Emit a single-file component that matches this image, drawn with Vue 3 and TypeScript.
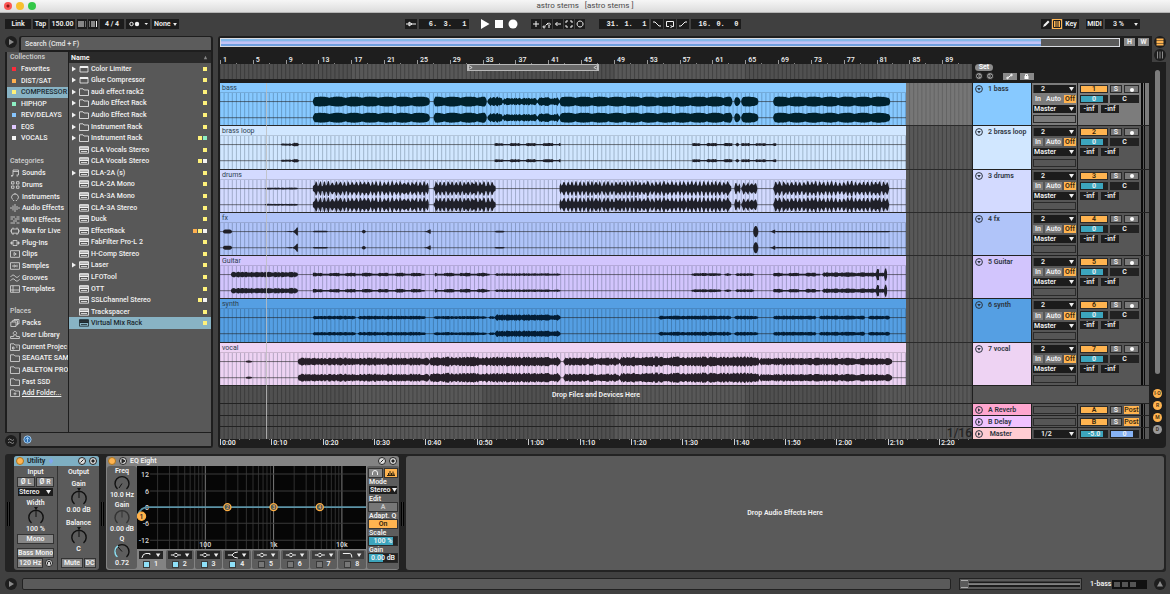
<script setup lang="ts">
interface Segment { from: number; to: number; amp: number; kind: 'swell' | 'noise' | 'spike' | 'burst' | 'solid' | 'rise' }
interface Track { name: string; tone: string; segments: Segment[] }

const seg = (from: number, to: number, amp: number, kind: Segment['kind']): Segment => ({ from, to, amp, kind })

const LANE = 753
const CLIP = 687
const BAR = 8.22

const tracks: Track[] = [
  { name: 'bass', tone: 'bass', segments: [
    seg(93, 210, 5, 'swell'), seg(214, 267, 5, 'swell'), seg(268, 283, 5, 'noise'), seg(283, 318, 3.8, 'noise'), seg(318, 340, 4.6, 'noise'),
    seg(340, 513, 5, 'swell'), seg(515, 521, 5, 'swell'), seg(522, 539, 5, 'swell'), seg(554, 671, 5, 'swell')] },
  { name: 'brass loop', tone: 'brass', segments: [
    seg(61, 72, 1.3, 'noise'), seg(72, 79, 2, 'noise'), seg(275, 341, 1.6, 'burst'), seg(473, 513, 1.6, 'burst'),
    seg(516, 520, 1.8, 'noise'), seg(522, 557, 1.6, 'burst')] },
  { name: 'drums', tone: 'drums', segments: [
    seg(45, 78, 1, 'noise'), seg(93, 209, 7.5, 'spike'), seg(214, 276, 7.5, 'spike'), seg(340, 512, 7.5, 'spike'),
    seg(515, 521, 7.5, 'spike'), seg(522, 538, 6.5, 'spike'), seg(554, 670, 7.5, 'spike')] },
  { name: 'fx', tone: 'fx', segments: [
    seg(3, 12, 2, 'solid'), seg(62, 72, 0.8, 'rise'), seg(71, 78, 5, 'rise'), seg(93, 108, 0.7, 'solid'), seg(142, 146, 1.8, 'solid'),
    seg(203, 211, 2.6, 'rise'), seg(275, 285, 0.8, 'solid'), seg(534, 539, 5.5, 'solid'), seg(549, 556, 2.4, 'rise'), seg(556, 671, 0.6, 'solid')] },
  { name: 'Guitar', tone: 'guitar', segments: [
    seg(11, 78, 2.9, 'noise'), seg(93, 205, 1.9, 'burst'), seg(215, 270, 1.9, 'burst'), seg(275, 341, 1.3, 'noise'),
    seg(472, 502, 1.5, 'noise'), seg(505, 512, 1.4, 'noise'), seg(516, 535, 1.4, 'noise'), seg(554, 601, 1.9, 'burst'),
    seg(603, 668, 2.3, 'noise'), seg(656, 660, 7.5, 'rise'), seg(657, 660, 7, 'solid'), seg(665, 668, 7.5, 'solid')] },
  { name: 'synth', tone: 'synth', segments: [
    seg(93, 136, 1.9, 'noise'), seg(138, 206, 1.9, 'noise'), seg(214, 267, 1.6, 'noise'), seg(269, 275, 1.6, 'noise'), seg(275, 341, 3.2, 'noise'),
    seg(439, 512, 2, 'noise'), seg(515, 539, 1.9, 'noise'), seg(554, 597, 2, 'noise'), seg(600, 646, 2, 'noise'), seg(649, 671, 2, 'noise')] },
  { name: 'vocal', tone: 'vocal', segments: [
    seg(26, 32, 1.4, 'noise'), seg(78, 210, 4.2, 'noise'), seg(210, 341, 5, 'noise'), seg(344, 400, 4.2, 'noise'),
    seg(400, 540, 5.2, 'noise'), seg(540, 673, 3.9, 'noise')] },
]

const random = (n: number): number => {
  const v = Math.sin(n * 12.9898) * 43758.5453
  return v - Math.floor(v)
}

function level(s: Segment, x: number): number {
  const t = (x - s.from) / (s.to - s.from)
  const edge = Math.min(1, (x - s.from + 0.6) / 2, (s.to - x + 0.6) / 2)
  const phase = ((x - 93) / (BAR * 2)) % 1
  if (s.kind === 'solid') return s.amp * edge
  if (s.kind === 'rise') return s.amp * (t > 0.8 ? 0.8 : t * t)
  if (s.kind === 'swell') return s.amp * edge * (0.7 + 0.3 * Math.sqrt(Math.abs(Math.sin(Math.PI * phase)))) * (0.94 + 0.06 * random(x))
  if (s.kind === 'spike') return s.amp * edge * (Math.round(x) % 4 < 2 ? 0.75 + 0.25 * random(x) : 0.3 + 0.3 * random(x))
  if (s.kind === 'burst') return s.amp * (Math.abs(phase) < 0.6 ? 0.6 + 0.4 * random(x) : 0.4)
  return s.amp * edge * (0.6 + 0.4 * random(x * 1.7))
}

function wave(segments: Segment[], mid: number): string {
  return segments.map((s) => {
    const up: string[] = []
    const down: string[] = []
    for (let x = s.from; x <= s.to; x += 1) {
      const a = level(s, x)
      up.push(`${x} ${(mid - a).toFixed(1)}`)
      down.unshift(`${x} ${(mid + a).toFixed(1)}`)
    }
    return `M${up.join('L')}L${down.join('L')}Z`
  }).join('')
}

const gridLines = Array.from({ length: 184 }, (_, i) => `M${(i * BAR / 2).toFixed(2)} 0V400`).join('')
const bands = [132, 395, 658].map((x) => ({ x, width: Math.min(131, LANE - x) }))
const barNumbers = Array.from({ length: 23 }, (_, i) => i * 4 + 1)
const times = Array.from({ length: 15 }, (_, i) => `${Math.floor(i / 6)}:${i % 6}0`)

const collections = [
  { name: 'Favorites', tone: 'red' }, { name: 'DIST/SAT', tone: 'orange' }, { name: 'COMPRESSOR', tone: 'yellow', active: true },
  { name: 'HIPHOP', tone: 'green' }, { name: 'REV/DELAYS', tone: 'blue' }, { name: 'EQS', tone: 'lilac' }, { name: 'VOCALS', tone: 'white' },
]
const folder = 'M.5 7.5V.8H4L5 2H9.5V7.5Z'
const categories = [
  { name: 'Sounds', icon: 'M3 6.5V1H8.5V6M3 2.5H8.5M1 6.5H3M6.5 6H8.5M1.2 7.3H2.6M6.6 7H8' },
  { name: 'Drums', icon: 'M1.5.7H4V3H1.5ZM6.5.7H9V3H6.5ZM1.5 5H4V7.3H1.5ZM6.5 5H9V7.3H6.5Z' },
  { name: 'Instruments', icon: 'M2.5 6.5A3.4 3.4 0 1 1 7.5 6.5M5 .6V2M3 7.5H4.2M5.8 7.5H7' },
  { name: 'Audio Effects', icon: 'M1 3V5M3 1.5V6.5M5 0V8M7 2V6M9 3V5' },
  { name: 'MIDI Effects', icon: 'M.5 1H5M6.5 1H9.5M.5 3H3M4.5 3H9.5M3 5H7M.5 7H5M6.5 7H9.5' },
  { name: 'Max for Live', icon: 'M1.5 2H8.5V6.2H1.5ZM3 .5V2M7 .5V2M3 6.2V8M7 6.2V8M0 4H1.5M8.5 4H10' },
  { name: 'Plug-Ins', icon: 'M3 1.5H7V6.5H3ZM0 4H3M7 4H10M1.5 2.5V5.5M8.5 2.5V5.5' },
  { name: 'Clips', icon: 'M.5.7H9.5V7.3H.5ZM4 2.5L6.3 4L4 5.5Z' },
  { name: 'Samples', icon: 'M.5.7H9.5V7.3H.5ZM3 3V5M4.3 2.5V5.5M5.7 3V5M7 2.7V5.3' },
  { name: 'Grooves', icon: 'M.5 3Q3 -.5 5 2.2T9.5 1.5M.5 6.8Q3 3.3 5 6T9.5 5.3' },
  { name: 'Templates', icon: 'M.5.7H9.5V7.3H.5ZM.5 5H9.5M3 .7V7.3' },
]
const places = [
  { name: 'Packs', icon: 'M.8 3H6V7.5H.8ZM2.3 3V1.7H7.5V6H6M4 1.7V.5H9V4.8H7.5' },
  { name: 'User Library', icon: 'M5 .5A1.7 1.7 0 1 1 4.9.5M.6 7.5V5.5H3.5L4 4M9.4 7.5V5.5H6.5L6 4M.6 7.5H9.4' },
  { name: 'Current Projec', icon: folder + 'M2.5 4H4V6H2.5ZM6 4H7.5' },
  { name: 'SEAGATE SAM', icon: folder }, { name: 'ABLETON PRO', icon: folder }, { name: 'Fast SSD', icon: folder },
  { name: 'Add Folder...', icon: folder + 'M5 3.3V6.3M3.5 4.8H6.5', link: true },
]

interface Item { name: string; icon: 'rack' | 'folder' | 'plug'; open?: boolean; dots?: string[]; active?: boolean }
const items: Item[] = [
  { name: 'Color Limiter', icon: 'rack', open: true }, { name: 'Glue Compressor', icon: 'rack', open: true },
  { name: 'audi effect rack2', icon: 'folder', open: true }, { name: 'Audio Effect Rack', icon: 'folder', open: true },
  { name: 'Audio Effect Rack', icon: 'folder', open: true }, { name: 'Instrument Rack', icon: 'folder', open: true },
  { name: 'Instrument Rack', icon: 'folder', open: true, dots: ['yellow', 'green'] },
  { name: 'CLA Vocals Stereo', icon: 'plug' }, { name: 'CLA Vocals Stereo', icon: 'plug', dots: ['yellow', 'white'] },
  { name: 'CLA-2A (s)', icon: 'plug', open: true }, { name: 'CLA-2A Mono', icon: 'plug' }, { name: 'CLA-3A Mono', icon: 'plug' },
  { name: 'CLA-3A Stereo', icon: 'plug' }, { name: 'Duck', icon: 'plug' },
  { name: 'EffectRack', icon: 'plug', dots: ['orange', 'yellow', 'white'] }, { name: 'FabFilter Pro-L 2', icon: 'plug' },
  { name: 'H-Comp Stereo', icon: 'plug' }, { name: 'Laser', icon: 'plug', open: true }, { name: 'LFOTool', icon: 'plug' },
  { name: 'OTT', icon: 'plug' }, { name: 'SSLChannel Stereo', icon: 'plug', dots: ['yellow', 'white'] },
  { name: 'Trackspacer', icon: 'plug' }, { name: 'Virtual Mix Rack', icon: 'plug', active: true },
]

const modes = [
  { label: 'MIDI arrangement overdub', d: 'M5 2V8M2 5H8' },
  { label: 'Automation arm', d: 'M2 7A1 1 0 1 0 2.1 7M3.5 6.5L6 4M7 4A1.2 1.2 0 1 0 7.1 4M6 8H8' },
  { label: 'Re-enable automation', d: 'M8 5H2.5M4.5 3L2.5 5L4.5 7' },
  { label: 'Capture MIDI', d: 'M2 4V2H4M6 2H8V4M8 6V8H6M4 8H2V6' },
  { label: 'Session record', d: 'M5 2A3 3 0 1 0 5.1 2' },
]
const loopModes = [
  { label: 'Punch in', d: 'M1 3H3L7 7H9' }, { label: 'Loop', d: 'M4 7.5H1.5V2.5H8.5V7.5H6.5M5.5 6L7 7.5L5.5 9' }, { label: 'Punch out', d: 'M1 7H3L7 3H9' },
]

const returns = [
  { key: 'A', name: 'A Reverb' }, { key: 'B', name: 'B Delay' },
]

const freqX = (f: number): number => Math.round((Math.log10(f) - 1) * 680) / 10
const minorLines = [1, 2, 3].flatMap((d) => Array.from({ length: 8 }, (_, i) => freqX((i + 2) * 10 ** d)))
  .filter((x) => x < 228).map((x) => `M${x} 0V83`).join('')
const majorLines = [100, 1000, 10000].map((f) => `M${freqX(f)} 0V83`).join('')
const nodes = [{ n: 2, x: 90 }, { n: 3, x: 136 }, { n: 4, x: 182 }]
const gains = [{ v: '12', y: 8 }, { v: '6', y: 25 }, { v: '0', y: 41 }, { v: '-6', y: 57 }, { v: '-12', y: 74 }]
const bell = 'M1 4H3.5Q6 .5 8.5 4Q6 7.5 3.5 4M8.5 4H11'
const filters = ['M1 7Q2 2.5 5 2.5H9V4M1 4', bell, bell, 'M1 4H5Q7 1 11 1M5 4Q7 7 11 7', bell, bell, bell, 'M1 2.5H8Q10 2.5 10 6.5']
  .map((d, i) => ({ n: i + 1, d, on: i < 4 }))
const eqKnobs = [
  { name: 'Freq', value: '10.0 Hz', d: 'M8 8.5L5 13', tone: '' },
  { name: 'Gain', value: '0.00 dB', d: 'M8 8.5V2', tone: 'dim' },
  { name: 'Q', value: '0.72', d: 'M8 8.5L4 4', tone: 'lit' },
]
</script>

<template>
  <div class="app">
    <header class="titlebar">
      <div class="lights"><i class="close"></i><i class="min"></i><i class="max"></i></div>
      <h1>astro stems &nbsp; [astro stems ]</h1>
    </header>

    <div class="toolbar">
      <div class="group">
        <button class="tool link">Link</button>
        <button class="tool tap">Tap</button>
        <input class="tool tempo" aria-label="Tempo" value="150.00">
        <span class="pair">
          <button class="tool nudge" aria-label="Nudge down"><svg viewBox="0 0 10 10"><path d="M2 2V8M4 2V8M6 2V8" /><path class="faint" d="M8.5 2V8" /></svg></button>
          <button class="tool nudge" aria-label="Nudge up"><svg viewBox="0 0 10 10"><path class="faint" d="M1.5 2V8" /><path d="M4 2V8M6 2V8M8.500 2V8" /></svg></button>
        </span>
        <input class="tool signature" aria-label="Time signature" value="4 / 4">
        <button class="tool metro" aria-label="Metronome"><svg viewBox="0 0 22 10"><circle cx="4.500" cy="5" r="1.700" /><circle class="full" cx="10" cy="5" r="2.200" /><path class="full" d="M17.500 4H21L19.200 6Z" /></svg></button>
        <select class="tool quantize" aria-label="Quantization"><option>None</option></select>
      </div>

      <div class="group">
        <button class="tool square" aria-label="Follow"><svg viewBox="0 0 10 10"><path d="M0 5H10M3 3L6 5L3 7Z" /></svg></button>
        <output class="tool position"><b>6.</b><b>3.</b><b>1</b></output>
        <div class="transport">
          <button aria-label="Play"><svg viewBox="0 0 10 10"><path d="M1 0V10L9.500 5Z" /></svg></button>
          <button aria-label="Stop"><svg viewBox="0 0 10 10"><path d="M1 1H9V9H1Z" /></svg></button>
          <button aria-label="Record"><svg viewBox="0 0 10 10"><circle cx="5" cy="5" r="4.500" /></svg></button>
        </div>
        <span class="pair modes">
          <button v-for="m in modes" :key="m.label" class="tool icon" :aria-label="m.label"><svg viewBox="0 0 10 10"><path :d="m.d" /></svg></button>
        </span>
        <output class="tool position"><b>31.</b><b>1.</b><b>1</b></output>
        <span class="pair">
          <button v-for="m in loopModes" :key="m.label" class="tool square" :aria-label="m.label"><svg viewBox="0 0 10 10"><path :d="m.d" /></svg></button>
        </span>
        <output class="tool position"><b>16.</b><b>0.</b><b>0</b></output>
      </div>

      <div class="group end">
        <button class="tool icon" aria-label="Draw mode"><svg viewBox="0 0 10 10"><path class="full" d="M2 8L3 5.500L7 1.500L8.500 3L4.500 7Z" /></svg></button>
        <button class="tool icon lit" aria-label="Computer MIDI keyboard"><svg viewBox="0 0 10 10"><path d="M1.500 1.500H8.500V8.500H1.500ZM4 1.500V8.500M6 1.500V8.500" /></svg></button>
        <button class="tool key">Key</button>
        <button class="tool midi">MIDI</button>
        <select class="tool cpu" aria-label="CPU load"><option>3 %</option></select>
      </div>
    </div>

    <main>
      <section class="browser">
        <div class="search">
          <button class="round" aria-label="Hide browser"><svg viewBox="0 0 12 12"><path class="full" d="M4 3V9L9 6Z" /></svg></button>
          <input type="search" placeholder="Search (Cmd + F)" aria-label="Search">
        </div>
        <div class="panes">
          <nav>
            <section class="collections">
              <h2>Collections</h2>
              <a v-for="c in collections" :key="c.name" href="#" :class="{ active: c.active }"><i class="swatch" :class="c.tone"></i><span>{{ c.name }}</span></a>
            </section>
            <section class="categories">
              <h2>Categories</h2>
              <a v-for="c in categories" :key="c.name" href="#"><svg viewBox="0 0 10 8"><path :d="c.icon" /></svg><span>{{ c.name }}</span></a>
            </section>
            <section class="places">
              <h2>Places</h2>
              <a v-for="c in places" :key="c.name" href="#"><svg viewBox="0 0 10 8"><path :d="c.icon" /></svg><span :class="{ under: c.link }">{{ c.name }}</span></a>
            </section>
          </nav>
          <div class="files">
            <div class="heading"><span>Name</span><svg viewBox="0 0 6 6"><path d="M1 5L3 1L5 5Z" /></svg></div>
            <ul>
              <li v-for="(f, i) in items" :key="i" :class="{ active: f.active }">
                <svg class="caret" viewBox="0 0 4 6"><path v-if="f.open" d="M0 .500V5.500L4 3Z" /></svg>
                <svg v-if="f.icon === 'folder'" class="glyph" viewBox="0 0 10 8"><path :d="folder" /></svg>
                <svg v-else-if="f.icon === 'rack'" class="glyph" viewBox="0 0 10 8"><path d="M1 1.500H9V7H1Z" /><path class="full" d="M1 1H9V3H1Z" /></svg>
                <svg v-else class="glyph" viewBox="0 0 10 8"><path d="M.500 .800H9.500V7.200H.500Z" /><path class="full" d="M.500 .500H9.500V4H.500Z" /><path class="cut" d="M2 1.500V3M4 1.500V3M6 1.500V3M8 1.500V3" /><path d="M2 5.500H8" /></svg>
                <span>{{ f.name }}</span>
                <i v-for="d in f.dots ?? ['yellow']" :key="d" class="dot" :class="d"></i>
              </li>
            </ul>
          </div>
        </div>
        <div class="foot">
          <button class="round" aria-label="Groove pool"><svg viewBox="0 0 12 12"><path d="M3 5Q4.500 3 6 4.700T9 4.500M3 8Q4.500 6 6 7.700T9 7.500" /></svg></button>
          <div><svg viewBox="0 0 10 10"><circle cx="5" cy="5" r="4" /><path d="M5 8V3M3 5L5 2.700L7 5" /></svg></div>
        </div>
      </section>

      <section class="arrangement">
        <div class="overview-row">
          <div class="overview"><i></i></div>
          <button class="fit">H</button><button class="fit">W</button>
        </div>
        <div class="board">
          <div class="timeline">
            <div class="bars"><span v-for="n in barNumbers" :key="n">{{ n }}</span></div>
            <div class="scrub">
              <svg viewBox="0 0 753 15" preserveAspectRatio="none">
                <rect v-for="b in bands" :key="b.x" class="band" :x="b.x" y="0" :width="b.width" height="15" />
                <path class="grid" :d="gridLines" />
              </svg>
              <div class="loop"><svg viewBox="0 0 6 6"><path d="M.500 .500V5.500L5 3Z" /></svg><svg viewBox="0 0 6 6"><path d="M5.500 .500L1 3L5.500 5.500Z" /></svg></div>
            </div>
            <div class="lanes">
              <svg class="backdrop" viewBox="0 0 753 356" preserveAspectRatio="none">
                <rect v-for="b in bands" :key="b.x" class="band" :x="b.x" y="0" :width="b.width" height="356" />
                <path class="grid" :d="gridLines" />
              </svg>
              <div class="tracks">
                <div v-for="t in tracks" :key="t.name" class="lane">
                  <div class="clip" :class="t.tone">
                    <span>{{ t.name }}</span>
                    <svg :viewBox="`0 10 ${CLIP} 32`" preserveAspectRatio="none">
                      <path class="lines" :d="gridLines" />
                      <path class="axis" :d="`M0 18.500H${CLIP}M0 34.500H${CLIP}`" />
                      <path class="wave" :d="wave(t.segments, 18.5) + wave(t.segments, 34.5)" />
                    </svg>
                  </div>
                </div>
              </div>
              <div class="drop">Drop Files and Devices Here</div>
              <div class="returns"><div></div><div></div><div><em>1/16</em></div></div>
              <i class="playhead"></i>
            </div>
            <div class="clock"><span v-for="t in times" :key="t">{{ t }}</span></div>
          </div>

          <div class="heads">
            <div class="locators">
              <button class="set">Set</button>
              <div>
                <button class="hop" aria-label="Previous locator"><svg viewBox="0 0 8 8"><circle cx="4" cy="4" r="3.500" /><path d="M6 4H2M3.500 2.500L2 4L3.500 5.500" /></svg></button>
                <button class="hop" aria-label="Next locator"><svg viewBox="0 0 8 8"><circle cx="4" cy="4" r="3.500" /><path d="M2 4H6M4.500 2.500L6 4L4.500 5.500" /></svg></button>
                <button class="mini" aria-label="Automation mode"><svg viewBox="0 0 13 7"><path d="M4.500 5L8.500 2" /><circle cx="4.500" cy="5" r=".8" /><circle cx="8.500" cy="2" r=".8" /></svg></button>
                <button class="mini" aria-label="Lock envelopes"><svg viewBox="0 0 13 7"><path class="full" d="M4.500 3H8.500V6H4.500Z" /><path d="M5.500 3V1.500H7.500V3" /></svg></button>
              </div>
            </div>
            <div class="tracks">
              <div v-for="(t, i) in tracks" :key="t.name" class="head" :class="{ picked: i === 0 }">
                <div class="name" :class="t.tone"><svg viewBox="0 0 8 8"><circle cx="4" cy="4" r="3.400" /><path d="M2.200 3H5.800L4 5.500Z" /></svg>{{ i + 1 }} {{ t.name }}</div>
                <div class="io">
                  <select class="field input" aria-label="Input channel"><option>2</option></select>
                  <div class="monitor"><button>In</button><button>Auto</button><button class="on">Off</button></div>
                  <select class="field" aria-label="Output"><option>Master</option></select>
                  <div class="blank"></div>
                </div>
                <div class="mixer">
                  <button class="activator">{{ i + 1 }}</button><button class="solo">S</button><button class="arm" aria-label="Arm"><i></i></button>
                  <div class="volume">0</div><div class="pan">C</div>
                  <div class="sends"><span>-inf</span><span>-inf</span></div>
                </div>
                <div class="meter"></div>
              </div>
            </div>
            <div class="gap"></div>
            <div class="buses">
              <div v-for="r in returns" :key="r.key" class="head">
                <div class="name" :class="'bus' + r.key"><svg viewBox="0 0 8 8"><circle cx="4" cy="4" r="3.400" /><path d="M3 2.200V5.800L5.500 4Z" /></svg>{{ r.name }}</div>
                <div class="io"><div class="blank"></div></div>
                <div class="mixer"><button class="activator">{{ r.key }}</button><button class="solo">S</button><button class="post">Post</button></div>
                <div class="meter"></div>
              </div>
              <div class="head">
                <div class="name master"><svg viewBox="0 0 8 8"><circle cx="4" cy="4" r="3.400" /><path d="M3 2.200V5.800L5.500 4Z" /></svg>&nbsp;Master</div>
                <div class="io"><select class="field input" aria-label="Cue output"><option>1/2</option></select></div>
                <div class="mixer"><div class="volume">-5.0</div><div class="pan cue">0</div></div>
                <div class="meter"></div>
              </div>
            </div>
          </div>
        </div>
      </section>

      <aside class="rail">
        <div class="views">
          <button class="round" aria-label="Arrangement view"><svg class="amber" viewBox="0 0 12 12"><path d="M2.500 3.500H9.500M2.500 6H9.500M2.500 8.500H9.500" /></svg></button>
          <button class="round" aria-label="Session view"><svg viewBox="0 0 12 12"><path d="M3.500 2.500V9.500M6 2.500V9.500M8.500 2.500V9.500" /></svg></button>
        </div>
        <div class="scroller"><i></i></div>
        <div class="toggles"><button>I·O</button><button>R</button><button>M</button><button class="off">D</button></div>
      </aside>
    </main>

    <section class="devices">
      <div class="grip"><i></i></div>
      <article class="utility">
        <header><i class="led"></i><h3>Utility</h3><svg class="hand" viewBox="0 0 8 8"><path d="M4 0L7 4L4 8L1 4Z" /></svg>
          <svg class="badge" viewBox="0 0 8 8"><circle cx="4" cy="4" r="3.500" /><path d="M2.500 5.500L5.500 2.500" /></svg>
          <svg class="badge" viewBox="0 0 8 8"><circle cx="4" cy="4" r="3.500" /><path d="M3 3H5V5H3Z" /></svg>
        </header>
        <div class="halves">
          <div class="half">
            <b>Input</b>
            <div class="twin g2"><button>Ø L</button><button>Ø R</button></div>
            <select class="field g2" aria-label="Channel mode"><option>Stereo</option></select>
            <b class="g3">Width</b>
            <svg class="knob" viewBox="0 0 18 18"><path class="ring" d="M4.500 16A7.200 7.200 0 1 1 13.500 16" /><path d="M9 10V3" /><path class="tip" d="M7 0H11L9 3Z" /></svg>
            <b>100 %</b>
            <button class="wide g2">Mono</button>
            <button class="wide g6">Bass Mono</button>
            <div class="twin g2"><button class="hz">120 Hz</button><svg viewBox="0 0 8 8"><circle cx="4" cy="4" r="3.500" /><path class="open" d="M2.500 5.500V3.800A1.500 1.500 0 0 1 5.500 3.800V5.500" /></svg></div>
          </div>
          <div class="half right">
            <b>Output</b>
            <b class="g4">Gain</b>
            <svg class="knob" viewBox="0 0 18 18"><path class="ring" d="M4.500 16A7.200 7.200 0 1 1 13.500 16" /><path d="M9 10V3" /><path class="tip" d="M7 0H11L9 3Z" /></svg>
            <b>0.00 dB</b>
            <b class="g5">Balance</b>
            <svg class="knob" viewBox="0 0 18 18"><path class="ring" d="M4.500 16A7.200 7.200 0 1 1 13.500 16" /><path d="M9 10V3" /><path class="tip" d="M7 0H11L9 3Z" /></svg>
            <b>C</b>
            <div class="twin last"><button class="mute">Mute</button><button>DC</button></div>
          </div>
        </div>
      </article>
      <div class="grip"><i></i></div>
      <article class="eq">
        <header><i class="led"></i><svg class="badge" viewBox="0 0 8 8"><circle cx="4" cy="4" r="3.500" /><path d="M3 2V6L6 4Z" /></svg><h3>EQ Eight</h3>
          <svg class="badge push" viewBox="0 0 8 8"><circle cx="4" cy="4" r="3.500" /><path d="M2.500 5.500L5.500 2.500" /></svg>
          <svg class="badge" viewBox="0 0 8 8"><circle cx="4" cy="4" r="3.500" /><path d="M3 3H5V5H3Z" /></svg>
        </header>
        <div class="eq-body">
          <div class="dials">
            <div v-for="k in eqKnobs" :key="k.name" :class="k.tone">
              <b>{{ k.name }}</b>
              <svg viewBox="0 0 16 16"><path class="ring" d="M3.500 14A7 7 0 1 1 12.500 14" /><path class="arc" d="M3.500 14A7 7 0 0 1 4 2.800" /><path :d="k.d" /></svg>
              <b>{{ k.value }}</b>
            </div>
          </div>
          <div class="scope">
            <svg class="graph" viewBox="0 0 228 83">
              <path class="minor" :d="minorLines" />
              <path class="major" :d="majorLines" />
              <path class="level" d="M13 8H228M13 25H228M13 57H228M13 74H228" />
              <text v-for="g in gains" :key="g.v" x="12" :y="g.y + 3" text-anchor="end">{{ g.v }}</text>
              <text x="68" y="81" text-anchor="middle">100</text>
              <text x="136" y="81" text-anchor="middle">1k</text>
              <text x="204" y="81" text-anchor="middle">10k</text>
              <path class="curve" d="M0 51Q3 41 11 41H228" />
              <g v-for="n in nodes" :key="n.n"><circle class="node" :cx="n.x" cy="41" r="3.500" /><text class="tiny" :x="n.x" y="43" text-anchor="middle">{{ n.n }}</text></g>
              <circle class="node solid" cx="4.500" cy="50" r="4" /><text class="ink" x="4.500" y="53" text-anchor="middle">1</text>
            </svg>
            <div class="filters">
              <div v-for="f in filters" :key="f.n" :class="{ current: f.n === 1, off: !f.on }">
                <button :aria-label="'Filter type ' + f.n"><svg viewBox="0 0 22 8"><path :d="f.d" transform="translate(1 0)" /><path class="full" d="M16 2.500H20.500L18.200 6Z" /></svg></button>
                <label><input type="checkbox" :checked="f.on">{{ f.n }}</label>
              </div>
            </div>
          </div>
          <div class="options">
            <div class="twin"><button aria-label="Audition"><svg viewBox="0 0 12 8"><path d="M3.500 6V4A2.500 2.500 0 0 1 8.500 4V6" /></svg></button><button class="on" aria-label="Analyze"><svg viewBox="0 0 12 8"><path d="M2 6.500H10M3.500 6V4M5 6V2M6.500 6V4M8 6V2.500M9 6V4.500" /></svg></button></div>
            <b>Mode</b><select class="field" aria-label="Mode"><option>Stereo</option></select>
            <b>Edit</b><button class="wide dimmed">A</button>
            <b>Adapt. Q</b><button class="wide on">On</button>
            <b>Scale</b><div class="bar full-bar">100 %</div>
            <b>Gain</b><div class="bar">0.00 dB</div>
          </div>
        </div>
      </article>
      <div class="grip"><i></i></div>
      <div class="dropzone">Drop Audio Effects Here</div>
    </section>

    <footer class="status">
      <button class="round" aria-label="Show help"><svg viewBox="0 0 12 12"><path class="full" d="M4 3V9L9 6Z" /></svg></button>
      <div class="message"></div>
      <div class="strip"><svg viewBox="0 0 121 10" preserveAspectRatio="none"><path class="dark" d="M9 3.500H120M9 7H120" /><path d="M1 1.500H8M1 8.500H8M8 5H120" /></svg></div>
      <span>1-bass</span>
      <div class="chain"><i></i><i></i><i></i></div>
      <button class="round" aria-label="Toggle device view"><svg viewBox="0 0 12 12"><path class="full" d="M3 8.500L6 3L9 8.500Z" /></svg></button>
    </footer>
  </div>
</template>

<style>
body { background: #404040; }
</style>

<style scoped>
* { box-sizing: border-box; }
.app { min-height: 100vh; display: flex; flex-direction: column; background: #404040; color: #f2f2f2; font: 500 7px/8px Roboto, "Liberation Sans", sans-serif; overflow: hidden; }
button, input, select { font: inherit; color: inherit; border: 0; padding: 0; margin: 0; border-radius: 0; background: none; display: block; outline: 0; }
select { appearance: none; }
button { text-align: center; overflow: hidden; white-space: nowrap; }
h1, h2, h3, ul { margin: 0; padding: 0; font: inherit; list-style: none; }
a { color: inherit; text-decoration: none; }
b { font-weight: 600; }
i { display: block; }
svg { display: block; fill: none; stroke: currentColor; stroke-width: 1; flex: none; }
.full { fill: currentColor; stroke: none; }

.titlebar { height: 13px; display: flex; align-items: center; background: linear-gradient(#f6f6f6, #dcdcdc); border-bottom: 1px solid #b5b5b5; color: #4a4a4a; }
.lights { display: flex; gap: 4px; flex: 1; }
.lights i { width: 8px; height: 8px; border-radius: 50%; background: #f8c02f; }
.lights .close { background: radial-gradient(#8c1a1a 1px, #fc5753 2px); margin-left: 4px; }
.lights .max { background: #33c748; }
.titlebar h1 { font-size: 8px; font-weight: 400; line-height: 10px; }
.titlebar::after { content: ""; flex: 1; }

.toolbar { height: 22px; display: grid; grid-template-columns: 1fr auto 1fr; align-items: center; padding: 0 30px 0 5px; }
.group { display: flex; gap: 2px; }
.group.end { justify-content: flex-end; gap: 1px; }
.tool { height: 10px; background: #1c1c1c; text-align: center; font-weight: 600; line-height: 10px; }
.tool svg { width: 10px; height: 10px; margin: 0 auto; }
.link { width: 26px; }
.tap { width: 15px; }
.tempo { width: 25px; }
.signature { width: 24px; }
.pair { display: flex; gap: 1px; }
.nudge { width: 10px; }
.faint { opacity: .4; }
.tool.metro { width: 24px; }
.tool.metro svg { width: 22px; }
.quantize, .cpu, .field { background: #1c1c1c url("data:image/svg+xml,%3Csvg xmlns='http://www.w3.org/2000/svg' viewBox='0 0 5 4'%3E%3Cpath fill='%23eee' d='M0 0H5L2.500 4Z'/%3E%3C/svg%3E") no-repeat right 2px center / 5px 4px; }
.quantize, .cpu { background-size: 4px 3px; }
.quantize { width: 27px; text-align: left; padding-left: 2px; }
.square { width: 12px; }
.icon { width: 10px; }
.position { display: flex; width: 50px; padding: 0 2px 0 8px; gap: 4px; font: 700 7px/10px "Liberation Mono", monospace; }
.position b { flex: 1; text-align: right; }
.transport { display: flex; gap: 4px; padding: 0 11px 0 9px; color: #fff; }
.transport svg { width: 10px; height: 10px; fill: currentColor; stroke: none; }
.modes { margin-right: 12px; }
.lit { background: #ffb755; color: #1c1c1c; }
.key { width: 16px; }
.midi { width: 17px; margin-left: 6px; }
.cpu { width: 35px; text-align: left; padding-left: 8px; margin-left: 1px; }

main { flex: 1; display: flex; padding: 1px 4px 0 5px; }
.round { width: 12px; height: 12px; border-radius: 50%; background: #1e1e1e; color: #8a8a8a; flex: none; }
.round svg { width: 12px; height: 12px; }
.browser { width: 208px; display: flex; flex-direction: column; margin-right: 5px; }
.search { display: flex; align-items: flex-start; gap: 2px; }
.search input { flex: 1; min-width: 0; height: 16px; border: 2px solid #1e1e1e; border-top-width: 1px; border-radius: 3px 3px 0 0; padding-left: 4px; background: #5c5c5c; }
.search input::placeholder { color: #e6e6e6; opacity: 1; }
.panes { flex: 1; display: flex; background: #1e1e1e; padding: 0 2px 1px; gap: 1px; }
nav { width: 61px; background: #585858; overflow: hidden; }
nav section { display: grid; grid-auto-rows: 1fr; }
.collections { height: 92px; }
.categories { height: 139px; margin-top: 12px; }
.places { height: 93px; margin-top: 11px; }
nav h2 { padding: 1px 0 0 3px; color: #cfcfcf; }
nav a { display: flex; align-items: center; gap: 2px; padding-left: 3px; white-space: nowrap; min-height: 0; }
nav a span { flex: 1; }
nav svg { width: 10px; height: 8px; stroke-width: .8; color: #dcdcdc; }
.under { text-decoration: underline; }
.active { background: #88b3c4; color: #1c2a30; }
.swatch { width: 4px; height: 4px; margin: 0 3px 0 2px; }
.red { background: #ff2a3a; } .orange { background: #ffb04f; } .yellow { background: #fff27a; } .green { background: #8ef0c4; }
.blue { background: #87c6ff; } .lilac { background: #e0c8ff; } .white { background: #f4f4f4; }
.files { flex: 1; background: #585858; min-width: 0; }
.heading { height: 11px; display: flex; align-items: center; justify-content: space-between; background: #2a2a2a; padding: 0 3px 0 2px; font-weight: 700; }
.heading svg { width: 5px; height: 5px; fill: #888; stroke: none; }
.files ul { height: 266px; display: grid; grid-auto-rows: 1fr; }
.files li { display: flex; align-items: center; padding: 0 4px 0 3px; gap: 1px; min-height: 0; }
.files li span { flex: 1; margin-left: 1px; }
.caret { width: 4px; height: 6px; margin-right: 2px; fill: currentColor; stroke: none; }
.glyph { width: 10px; height: 8px; stroke-width: .8; }
.glyph .cut { stroke: #444; }
.dot { width: 4px; height: 4px; }
.foot { display: flex; gap: 2px; align-items: center; }
.foot div { flex: 1; height: 15px; background: #5a5a5a; border: 2px solid #1e1e1e; border-top: 0; border-radius: 0 0 3px 3px; padding: 2px; }
.foot div svg { width: 9px; height: 9px; fill: #2f6fb0; color: #a8d3f5; }

.arrangement { flex: 1; min-width: 0; background: #1e1e1e; padding: 2px 3px 0 2px; border-radius: 3px 0 0 3px; display: flex; flex-direction: column; }
.overview-row { display: flex; gap: 3px; height: 9px; }
.overview { flex: 1; border: 1px solid #d9dbe0; background: #5a5a5a; margin-right: 1px; }
.overview i { width: 91.300%; height: 100%; background: linear-gradient(#84b9ea 0 2px, #aebcf0 2px 3px, #c3c4f6 3px 5px, #6f9fdf 5px); }
.fit { width: 11px; height: 8px; background: #8a8a8a; font-weight: 700; }
.board { display: flex; gap: 1px; flex: 1; }
.timeline { flex: 1; min-width: 0; }
.bars { height: 17px; display: flex; align-items: flex-end; overflow: hidden; }
.bars span { flex: 0 0 4.367%; height: 7px; line-height: 6px; padding-left: 3px; background: linear-gradient(#999, #999) no-repeat 0 3px / 1px 4px, linear-gradient(#888, #888) no-repeat 50% 6px / 1px 1px; }
.scrub { height: 15px; background: #505050; margin-bottom: 4px; position: relative; }
.scrub > svg { width: 100%; height: 15px; }
.band { fill: #fff; fill-opacity: .05; stroke: none; }
.grid { stroke: #000; stroke-opacity: .25; }
.loop { position: absolute; left: 32.800%; width: 17.600%; top: 0; height: 7px; border: 1px solid #b8b8b8; background: #6a6a6a; display: flex; justify-content: space-between; color: #e0e0e0; }
.loop svg { width: 5px; height: 5px; }
.lanes { position: relative; background: #505050; }
.backdrop { position: absolute; inset: 0; width: 100%; height: 100%; }
.tracks { height: 303px; display: grid; grid-auto-rows: 1fr; position: relative; }
.lane { border-bottom: 1px solid #2a2a2a; min-height: 0; }
.lane:first-child { background: rgba(255, 255, 255, .18); }
.clip { width: 91.235%; height: 100%; display: flex; flex-direction: column; color: #2c3e50; font-weight: 400; }
.clip span { height: 10px; line-height: 11px; padding-left: 2px; border-bottom: 1px solid rgba(0, 0, 0, .14); flex: none; }
.clip svg { flex: 1; min-height: 0; width: 100%; overflow: hidden; }
.lines { stroke: #123; stroke-opacity: .25; }
.axis { stroke: #222; stroke-width: .8; stroke-opacity: .75; }
.wave { fill: #1f2029; stroke: none; }
.bass { background: #87c9ff; } .bass .wave { fill: #00212c; }
.brass { background: #d1e7ff; }
.drums { background: #d3daff; }
.fx { background: #b0c4f9; }
.guitar { background: #d2c5fd; }
.synth { background: #559fe3; } .synth .wave { fill: #031d35; }
.vocal { background: #eed3f3; } .vocal .wave { fill: #271f29; }
.drop { position: relative; height: 18px; line-height: 18px; border-bottom: 1px solid #222; text-align: center; font-weight: 600; }
.returns { position: relative; height: 35px; display: grid; grid-auto-rows: 1fr; }
.returns div { border-bottom: 1px solid #222; text-align: right; min-height: 0; }
.returns div:last-child { border: 0; }
.returns em { font: 500 12px/12px Roboto, sans-serif; color: #242424; }
.playhead { position: absolute; top: 0; bottom: 0; left: 6.100%; width: 1px; background: rgba(190, 190, 190, .8); }
.clock { height: 9px; display: flex; overflow: hidden; }
.clock span { flex: 0 0 6.830%; padding-left: 2px; line-height: 9px; background: linear-gradient(#ccc, #ccc) no-repeat 0 0 / 1px 6px, repeating-linear-gradient(90deg, transparent 0 9px, #777 9px 10px) no-repeat 0 0 / 100% 1px; }

.heads { width: 176px; flex: none; }
.locators { height: 36px; padding: 17px 2px 0; color: #222; }
.set { width: 18px; height: 7px; line-height: 7px; border-radius: 4px; background: #8c8c8c; color: #fff; font-weight: 600; }
.locators div { display: flex; gap: 3px; margin-top: 1px; }
.hop { width: 8px; height: 8px; }
.hop svg { width: 8px; height: 8px; fill: #9a9a9a; stroke: #222; }
.mini { width: 14px; height: 7px; background: #8a8a8a; color: #fff; margin-top: 1px; }
.hop + .mini { margin-left: 6px; }
.mini svg { width: 13px; height: 7px; }
.head { display: grid; grid-template-columns: 58px 45px 62px 8px; column-gap: 1px; border-bottom: 1px solid #222; min-height: 0; }
.name { color: #2c3440; font-weight: 600; padding: 1px 0 0 2px; display: flex; gap: 5px; line-height: 10px; }
.name svg { width: 8px; height: 8px; margin-top: 1px; }
.name path { fill: currentColor; stroke: none; }
.io { background: #565656; padding: 2px 1px 2px; display: flex; flex-direction: column; justify-content: space-between; }
.picked .io, .picked .mixer, .picked .meter { background-color: #7c7c7c; }
.field { height: 8px; line-height: 8px; padding-left: 1px; width: 100%; font-weight: 600; }
.input { padding-left: 7px; border-left: 1px solid #444; }
.monitor { display: grid; grid-template-columns: 10px 1fr 12px; gap: 2px; font-weight: 600; }
.monitor button, .solo, .arm { background: #7a7a7a; height: 8px; }
.monitor .on, .activator, .post, .wide.on, .twin .on { background: #ffb450; color: #33240c; }
.blank { height: 8px; border: 1px solid #2a2a2a; }
.mixer { background: #565656; padding: 2px 0 2px 2px; display: grid; grid-template-columns: 28px 12px 15px; grid-auto-rows: 8px; gap: 2px; text-align: center; font-weight: 600; }
.activator, .solo, .arm { height: 8px; border: 1px solid #2a2a2a; line-height: 6px; }
.post { height: 8px; font-weight: 500; }
.arm i { width: 4px; height: 4px; border-radius: 50%; background: #fff; margin: 1px auto 0; }
.volume { background: linear-gradient(90deg, #3ca5bd 84%, #222 84%); border: 1px solid #222; line-height: 6px; }
.pan { grid-column: span 2; background: #222; }
.cue { background: linear-gradient(90deg, #87b3f5 82%, #222 82%); border: 1px solid #222; line-height: 6px; }
.sends { grid-column: span 3; display: flex; gap: 3px; }
.sends span { width: 18px; background: #1e1e1e; }
.meter { background: linear-gradient(90deg, transparent 1px, #0a0a0a 1px 3px, transparent 3px 4px, #0a0a0a 4px 5px, transparent 5px) #565656; margin-left: -1px; }
.gap { height: 18px; background: #565656; border-bottom: 1px solid #222; width: 176px; }
.buses { height: 36px; display: grid; grid-auto-rows: 1fr; }
.buses .io, .buses .mixer { padding-top: 2px; padding-bottom: 0; justify-content: flex-start; }
.busA { background: #ffa6cf; } .busB { background: #f0c2ff; } .master { background: #ffccd2; }

.rail { width: 14px; display: flex; flex-direction: column; background: #1e1e1e; border-radius: 0 4px 4px 0; }
.views { height: 26px; background: #404040; padding-left: 2px; display: flex; flex-direction: column; gap: 1px; }
.amber { color: #ffb450; stroke-width: 2; }
.scroller { flex: 1; padding: 8px 0 8px 3px; max-height: 320px; }
.scroller i { width: 5px; height: 100%; border-radius: 3px; background: #7c7c7c; }
.toggles { display: grid; gap: 3px; padding: 7px 0 0 1px; }
.toggles button { width: 9px; height: 9px; border-radius: 50%; background: #ffb450; color: #33240c; font-size: 5px; line-height: 9px; }
.toggles .off { background: #9a9a9a; }

.devices { display: flex; margin: 6px 4px 0 5px; background: #232323; padding: 2px 2px 2px 0; height: 118px; border-radius: 3px; }
.grip { width: 7px; flex: none; padding: 46px 2px 0; }
.grip:first-child { width: 9px; }
.grip i { width: 3px; height: 24px; background: linear-gradient(90deg, #000 1px, #333 1px 2px, #000 2px); }
.utility { width: 85px; background: #5b5b5b; border-radius: 3px; overflow: hidden; }
.eq { width: 293px; background: #838383; border-radius: 3px; overflow: hidden; display: flex; flex-direction: column; }
article header { height: 10px; display: flex; align-items: center; gap: 3px; padding: 0 2px; }
.utility header { background: #7eafc3; color: #15232a; }
article h3 { font-weight: 600; }
.led { width: 8px; height: 8px; border-radius: 50%; background: #ffb450; border: 1px solid #a87420; }
.hand { width: 6px; height: 6px; fill: #7fa4ef; stroke: none; margin-right: auto; }
.badge { width: 8px; height: 8px; fill: #ddd; color: #222; }
.badge path { fill: #222; }
.push { margin-left: auto; }
.halves { display: flex; height: 104px; }
.half { flex: 1; padding: 2px 4px 3px; display: flex; flex-direction: column; align-items: center; text-align: center; }
.half + .half { border-left: 1px solid #333; }
.half .knob { width: 18px; height: 18px; color: #111; }
.ring { stroke-width: 1.400; }
.tip { fill: #111; stroke: none; }
.g2 { margin-top: 2px; } .g3 { margin-top: 3px; } .g4 { margin-top: 4px; } .g5 { margin-top: 5px; } .g6 { margin-top: 6px; }
.twin { display: flex; gap: 3px; width: 100%; height: 8px; font-weight: 600; }
.twin button { flex: 1; background: #868686; box-shadow: 0 0 0 1px #333; }
.twin .hz { flex: 3; }
.twin svg { width: 8px; height: 8px; }
.half > .twin > svg { fill: #ddd; color: #222; }
.open { fill: none; }
.twin .mute { flex: 2; }
.last { margin-top: auto; }
.wide { width: 100%; height: 8px; background: #868686; box-shadow: 0 0 0 1px #333; font-weight: 600; }
.eq-body { flex: 1; display: flex; }
.dials { width: 30px; margin-left: 1px; background: #5d5d5d; display: flex; flex-direction: column; justify-content: space-between; padding: 1px 0 2px; text-align: center; border-radius: 3px; margin-bottom: 1px; }
.dials svg { width: 18px; height: 16px; margin: 0 auto; color: #111; }
.dials .dim svg { color: #333; }
.dials .arc { stroke: none; }
.dials .lit { background: none; color: inherit; }
.dials .lit .arc { stroke: #8fdcee; stroke-width: 1.500; }
.scope { flex: 1; min-width: 0; display: flex; flex-direction: column; }
.graph { width: 100%; background: #060606; }
.graph text { font: 500 7px Roboto, sans-serif; fill: #d8d8d8; stroke: none; }
.graph .tiny { font-size: 5px; fill: #ffb450; }
.graph .ink { fill: #222; }
.minor { stroke: #303030; } .major { stroke: #7a7a7a; } .level { stroke: #3a3a3a; }
.curve { stroke: #5c93a6; stroke-width: 1.800; }
.node { stroke: #ffae42; stroke-width: 1.300; fill: #4b5a5c; }
.node.solid { fill: #ffb450; }
.filters { flex: 1; display: grid; grid-template-columns: repeat(8, 1fr); gap: 1px; padding: 1px 0; }
.filters > div { background: #5d5d5d; padding: 1px 2px; display: flex; flex-direction: column; justify-content: space-between; border-radius: 2px; min-width: 0; }
.filters .current { background: #838383; }
.filters button { background: #242424; height: 8px; width: 100%; }
.filters .off button { background: #3d3d3d; }
.filters button svg { width: 100%; height: 8px; }
.filters label { display: flex; align-items: center; gap: 4px; padding-left: 4px; font-weight: 600; }
.filters input { appearance: none; width: 7px; height: 7px; border: 1px solid #3a3a3a; background: #777; }
.filters input:checked { background: #8fe0f8; }
.options { width: 32px; padding: 3px 2px 2px 2px; background: #5d5d5d; margin: 0 0 1px 1px; display: flex; flex-direction: column; font-weight: 600; border-radius: 2px; }
.options > b { margin-top: 1px; }
.options svg { width: 12px; height: 8px; margin: 0 auto; }
.options .field, .options .wide, .options .bar { height: 8px; flex: none; }
.options .field { background-position: right 0 center; }
.options .dimmed { color: #ccc; background: #777; }
.bar { text-align: center; box-shadow: 0 0 0 1px #2a2a2a; background: linear-gradient(90deg, #3ca5bd 50%, #222 50%); }
.full-bar { background: linear-gradient(90deg, #3ca5bd 84%, #222 84%); }
.dropzone { flex: 1; background: #5a5a5a; display: flex; align-items: center; justify-content: center; font-weight: 600; border-radius: 3px; }

.status { height: 22px; display: flex; align-items: center; padding: 2px 4px 0 5px; }
.message { flex: 1; height: 12px; margin-left: 5px; background: #5a5a5a; border: 1px solid #222; border-radius: 2px; }
.strip { width: 123px; height: 12px; margin: 0 8px; border: 1px solid #222; background: #5a5a5a; color: #aaa; }
.strip svg { width: 100%; height: 10px; }
.strip .dark { stroke: #1c1c1c; stroke-width: 2; }
.status span { font-weight: 600; width: 22px; }
.chain { width: 35px; height: 9px; background: #111; display: flex; align-items: center; gap: 2px; padding-left: 2px; margin-right: 7px; }
.chain i { width: 6px; height: 5px; background: #555; }
</style>
